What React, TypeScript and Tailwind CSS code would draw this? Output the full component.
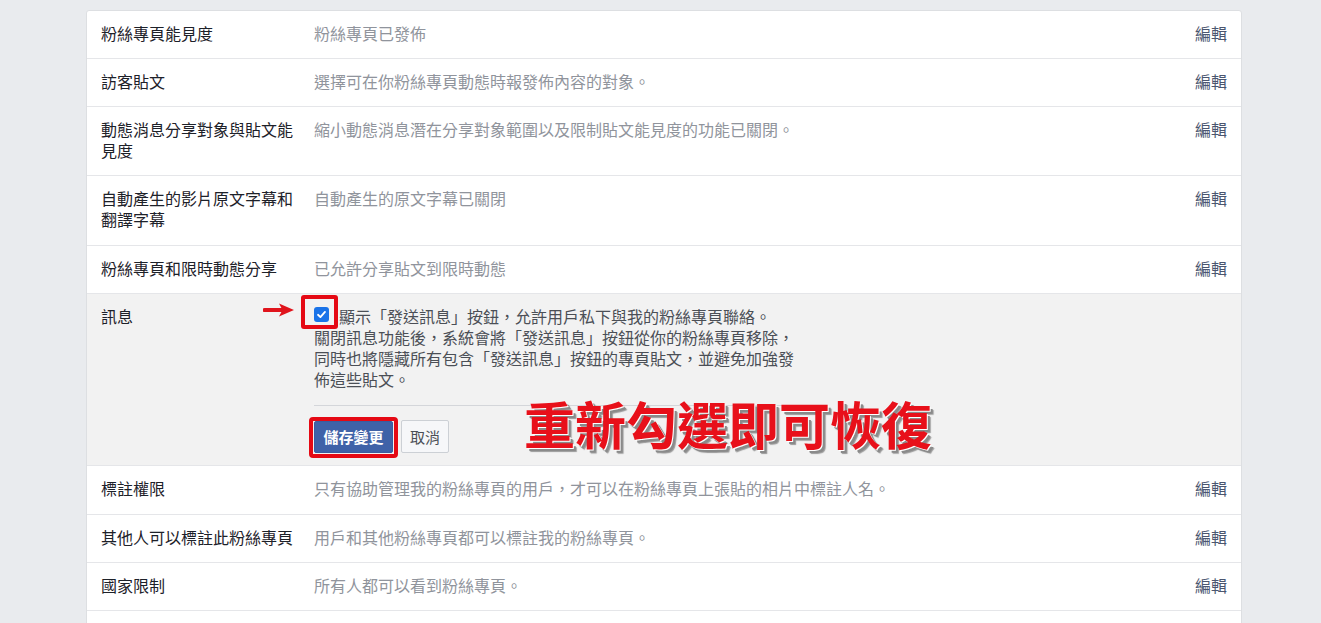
import React from "react";

const font = {
  fontFamily: '"Noto Sans CJK TC", "Noto Sans", sans-serif',
};

type RowProps = { label: string; value: string; extra?: boolean };

function Row({ label, value, extra }: RowProps) {
  return (
    <div
      className={
        extra
          ? "flex border-b border-[#e5e6e9] px-[14px] pt-[12px] pb-[15px] text-[16px] leading-[21px]"
          : "flex border-b border-[#e5e6e9] px-[14px] pt-[12px] pb-[14px] text-[16px] leading-[21px]"
      }
    >
      <div className="w-[199px] mr-[14px] shrink-0 text-[#1d2129]">{label}</div>
      <div className="flex-1 text-[#90949c]">{value}</div>
      <div className="ml-4 shrink-0 text-[#4b5670]">編輯</div>
    </div>
  );
}

function MessageRow() {
  return (
    <div className="relative flex border-b border-[#e5e6e9] bg-[#f2f2f2] px-[14px] pt-[12px] pb-[12px] text-[16px] leading-[21px]">
      <div className="w-[199px] mr-[14px] shrink-0 text-[#1d2129]">訊息</div>
      <div className="flex-1">
        <div className="w-[488px] text-[#4b4f56]">
          <div className="flex items-start">
            <span className="relative mt-[1px] mr-[10px] flex h-[15px] w-[15px] shrink-0 items-center justify-center rounded-[3px] bg-[#1a73e8]">
              <svg width="11" height="11" viewBox="0 0 12 12" fill="none">
                <path d="M2.2 6.3 L4.8 8.8 L9.8 3.2" stroke="#fff" strokeWidth="2" strokeLinecap="round" strokeLinejoin="round" />
              </svg>
              <span className="absolute left-[-13px] top-[-12px] h-[34px] w-[37px] rounded-[3px] border-[4px] border-[#e50914]" />
              <svg className="absolute left-[-51px] top-[-5px]" width="32" height="16" viewBox="0 0 32 16">
                <path d="M1.5 8 H20" stroke="#e0141c" strokeWidth="4" strokeLinecap="round" />
                <path d="M16 1.5 L31 8 L16 14.5 L19.5 8 Z" fill="#e0141c" />
              </svg>
            </span>
            <span>顯示「發送訊息」按鈕，允許用戶私下與我的粉絲專頁聯絡。</span>
          </div>
          <div>
            關閉訊息功能後，系統會將「發送訊息」按鈕從你的粉絲專頁移除，
            <br />
            同時也將隱藏所有包含「發送訊息」按鈕的專頁貼文，並避免加強發
            <br />
            佈這些貼文。
          </div>
        </div>
        <div className="mt-[15px] h-px w-[488px] bg-[#d4d6da]" />
        <div className="mt-[14px] flex items-center">
          <div className="relative">
            <button className="flex h-[32px] w-[79px] items-center justify-center rounded-[2px] border border-[#3b5c9f] bg-[#3f62a8] text-[15px] font-bold text-white">
              儲存變更
            </button>
            <span className="pointer-events-none absolute left-[-5px] top-[-4px] h-[41px] w-[89px] rounded-[4px] border-[4px] border-[#e50914]" />
          </div>
          <button className="ml-[8px] flex h-[33px] w-[48px] items-center justify-center rounded-[2px] border border-[#ccd0d5] bg-[#f6f7f9] text-[15px] text-[#4b4f56]">
            取消
          </button>
        </div>
      </div>
      <div className="ml-4 w-[30px] shrink-0" />
      <div className="pointer-events-none absolute left-[437px] top-[104px] whitespace-nowrap text-[51px] font-bold leading-[50px] text-[#e8101a] [text-shadow:1px_1px_0_#ffffff,3px_3px_0_#8a8a8a,4px_4px_1px_#9a9a9a]">
        重新勾選即可恢復
      </div>
    </div>
  );
}

export default function App() {
  const rowsTop: RowProps[] = [
    { label: "粉絲專頁能見度", value: "粉絲專頁已發佈" },
    { label: "訪客貼文", value: "選擇可在你粉絲專頁動態時報發佈內容的對象。" },
    { label: "動態消息分享對象與貼文能見度", value: "縮小動態消息潛在分享對象範圍以及限制貼文能見度的功能已關閉。" },
    { label: "自動產生的影片原文字幕和翻譯字幕", value: "自動產生的原文字幕已關閉", extra: true },
    { label: "粉絲專頁和限時動態分享", value: "已允許分享貼文到限時動態" },
  ];
  const rowsBottom: RowProps[] = [
    { label: "標註權限", value: "只有協助管理我的粉絲專頁的用戶，才可以在粉絲專頁上張貼的相片中標註人名。", extra: true },
    { label: "其他人可以標註此粉絲專頁", value: "用戶和其他粉絲專頁都可以標註我的粉絲專頁。" },
    { label: "國家限制", value: "所有人都可以看到粉絲專頁。" },
    { label: "年齡限制", value: "粉絲專頁對所有人顯示。" },
  ];
  return (
    <div className="min-h-screen bg-[#e9ebee] pt-[10px] pl-[86px] [text-spacing-trim:space-all]" style={font}>
      <div className="w-[1156px] overflow-hidden rounded-[3px] border border-[#dddfe2] bg-white">
        {rowsTop.map((r) => (
          <Row key={r.label} {...r} />
        ))}
        <MessageRow />
        {rowsBottom.map((r) => (
          <Row key={r.label} {...r} />
        ))}
      </div>
    </div>
  );
}
